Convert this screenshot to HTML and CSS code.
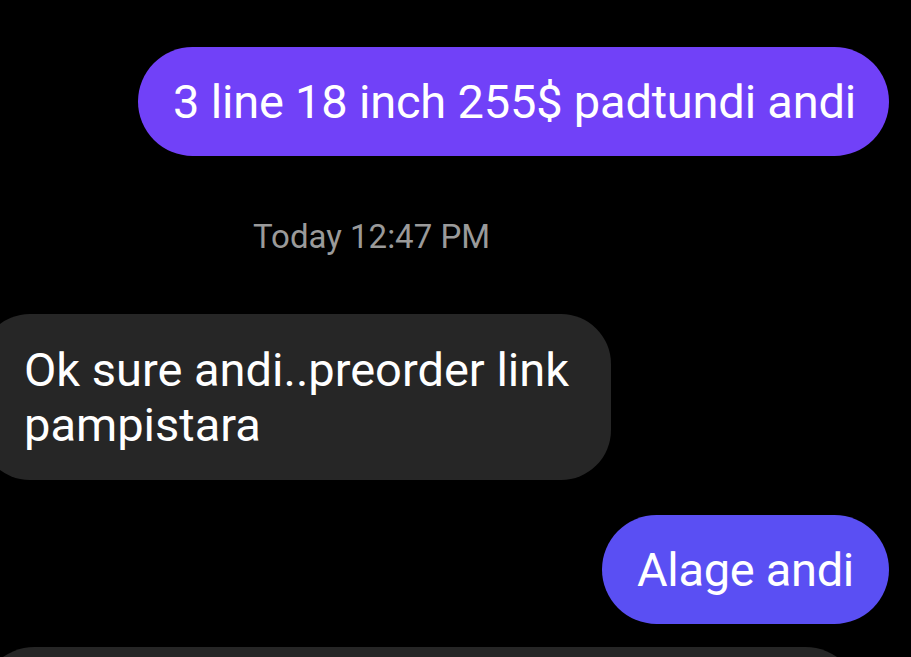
FILE: index.html
```html
<!DOCTYPE html>
<html lang="en">
<head>
    <meta charset="UTF-8">
    <meta name="viewport" content="width=device-width, initial-scale=1.0">
    <title>Messages</title>
    <link rel="stylesheet" href="styles.css">
</head>
<body>
    <div class="thread">
        <div class="row row-out first">
            <div class="bubble bubble-out tone-1 long">3 line 18 inch 255$ padtundi andi</div>
        </div>

        <div class="stamp">Today 12:47 PM</div>

        <div class="row row-in after-stamp">
            <div class="bubble bubble-in wide">Ok sure andi..preorder link pampistara</div>
        </div>

        <div class="row row-out">
            <div class="bubble bubble-out tone-2 short">Alage andi</div>
        </div>

        <div class="row row-in next-row">
            <div class="bubble bubble-in next">&nbsp;</div>
        </div>
    </div>
</body>
</html>
```

FILE: styles.css
```css
html, body {
    height: 100%;
    margin: 0;
    padding: 0;
    background: #000;
}

body {
    overflow: hidden;
    font-family: Roboto, "Liberation Sans", sans-serif;
    color: #fff;
}

.thread {
    display: flex;
    flex-direction: column;
    height: 100%;
    padding-top: 47px;
    box-sizing: border-box;
}

.row {
    display: flex;
    flex-shrink: 0;
}

.row-out {
    justify-content: flex-end;
    padding-right: 22px;
    margin-top: 35px;
}

.row-out.first {
    margin-top: 0;
}

.row-in {
    justify-content: flex-start;
    margin-left: -20px;
}

.after-stamp {
    margin-top: 57px;
}

.next-row {
    margin-top: 23px;
}

.bubble {
    box-sizing: border-box;
    font-size: 47px;
    line-height: 55px;
    padding: 27px 35px;
    border-radius: 56px;
}

.bubble-out {
    color: #fff;
}

.long {
    letter-spacing: -0.2px;
    padding: 27px 33px 27px 35px;
}

.short {
    letter-spacing: -0.3px;
}

.tone-1 {
    background: #7141f8;
}

.tone-2 {
    background: #5a4ff3;
}

.bubble-in {
    background: #262626;
}

.wide {
    max-width: 631px;
    padding: 28px 36px 28px 44px;
    border-radius: 50px;
}

.next {
    width: 880px;
}

.stamp {
    align-self: flex-start;
    margin: 61px 0 0 253px;
    font-size: 33px;
    line-height: 40px;
    color: #9a9a9a;
}
```
